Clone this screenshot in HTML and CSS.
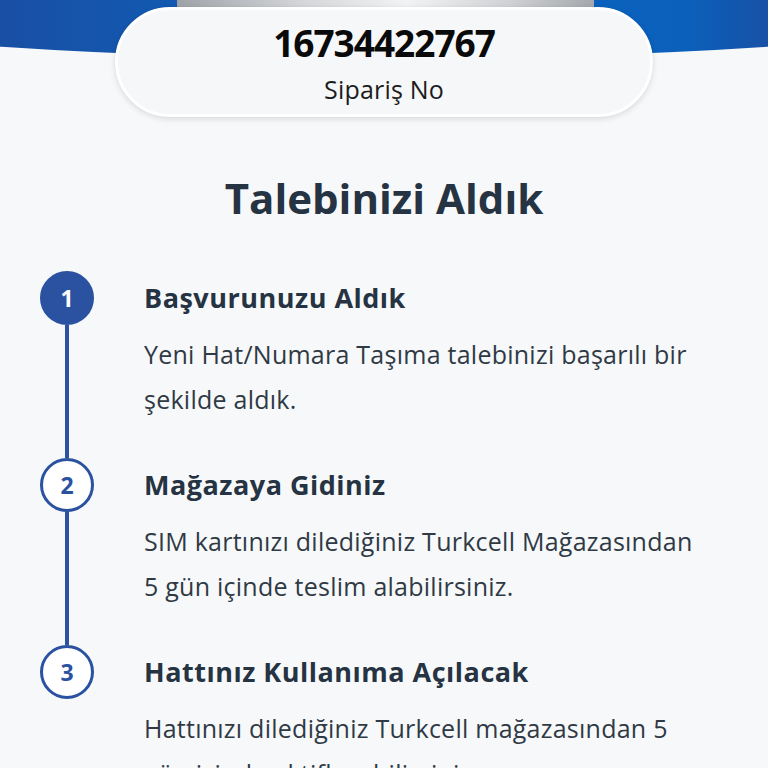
FILE: index.html
```html
<!DOCTYPE html>
<html lang="tr">
<head>
<meta charset="utf-8">
<title>Talebinizi Aldık</title>
<link rel="stylesheet" href="styles.css">
</head>
<body>
<header class="hero">
  <div class="hero-arc"></div>
  <div class="hero-device"></div>
</header>
<section class="order-card">
  <div class="order-number">16734422767</div>
  <div class="order-label">Sipariş No</div>
</section>
<h1 class="title">Talebinizi Aldık</h1>
<ol class="steps">
  <li class="step">
    <div class="rail"><span class="dot dot-active">1</span><span class="line"></span></div>
    <div class="step-body">
      <h2 class="step-title">Başvurunuzu Aldık</h2>
      <p class="step-text">Yeni Hat/Numara Taşıma talebinizi başarılı bir şekilde aldık.</p>
    </div>
  </li>
  <li class="step">
    <div class="rail"><span class="dot">2</span><span class="line"></span></div>
    <div class="step-body">
      <h2 class="step-title">Mağazaya Gidiniz</h2>
      <p class="step-text">SIM kartınızı dilediğiniz Turkcell Mağazasından 5 gün içinde teslim alabilirsiniz.</p>
    </div>
  </li>
  <li class="step">
    <div class="rail"><span class="dot">3</span></div>
    <div class="step-body">
      <h2 class="step-title">Hattınız Kullanıma Açılacak</h2>
      <p class="step-text">Hattınızı dilediğiniz Turkcell mağazasından 5 gün içinde aktifleyebilirsiniz.</p>
    </div>
  </li>
</ol>
</body>
</html>
```

FILE: styles.css
```css
* { box-sizing: border-box; }
html, body { margin: 0; padding: 0; }
body {
  background: #f7f8fa;
  font-family: "Open Sans", "Noto Sans", sans-serif;
  color: #253342;
  width: 768px;
  height: 768px;
  overflow: hidden;
}
.hero {
  position: relative;
  height: 60px;
  overflow: hidden;
}
.hero-arc {
  width: 2000px;
  height: 320px;
  margin-left: -616px;
  margin-top: -261px;
  border-radius: 50%;
  background: linear-gradient(90deg, #0d2f7a 0%, #1a4ea3 30%, #0a66c2 50%, #0b60bb 65%, #1a4ea3 70%, #0d2f7a 100%);
}
.hero-device {
  position: absolute;
  left: 177px;
  top: 0;
  width: 417px;
  height: 8px;
  background: linear-gradient(90deg, #9fa3a8 0%, #d4d6d9 30%, #f2f3f4 55%, #cfd1d4 80%, #a5a8ac 100%);
}
.order-card {
  position: relative;
  width: 538px;
  height: 110px;
  margin: -53px auto 0;
  border-radius: 55px;
  background: #f6f7f9;
  border: 3px solid #fff;
  box-shadow: 0 2px 6px rgba(0, 0, 0, 0.12), 0 0 1px rgba(0,0,0,0.1);
  display: flex;
  flex-direction: column;
  align-items: center;
  padding-top: 11px;
}
.order-number {
  font-size: 37px;
  font-weight: 700;
  color: #0a0a0a;
  line-height: 44px;
  letter-spacing: -1px;
}
.order-label {
  font-size: 25px;
  color: #1c1c1c;
  line-height: 32px;
  letter-spacing: 0.2px;
  margin-top: 8px;
}
.title {
  margin: 57px 0 0;
  text-align: center;
  font-size: 42px;
  line-height: 48px;
  font-weight: 700;
  color: #253342;
}
.steps {
  list-style: none;
  margin: 49px 0 0;
  padding: 0 0 0 40px;
}
.step {
  display: flex;
  gap: 50px;
  min-height: 187px;
}
.rail {
  width: 54px;
  flex: none;
  display: flex;
  flex-direction: column;
  align-items: center;
}
.dot {
  width: 54px;
  height: 54px;
  flex: none;
  border-radius: 50%;
  border: 3px solid #2a52a0;
  background: #fff;
  color: #2a52a0;
  display: flex;
  align-items: center;
  justify-content: center;
  font-size: 23px;
  font-weight: 700;
}
.dot-active {
  background: #2a52a0;
  color: #fff;
}
.line {
  width: 4px;
  flex: 1;
  background: #2a52a0;
}
.step-body {
  width: 556px;
}
.step-title {
  margin: 0;
  font-size: 27px;
  line-height: 54px;
  font-weight: 700;
  color: #253342;
  letter-spacing: 0.5px;
}
.step-text {
  margin: 7px 0 0;
  font-size: 25px;
  line-height: 45px;
  letter-spacing: 0.25px;
  color: #2f3a45;
}
```
